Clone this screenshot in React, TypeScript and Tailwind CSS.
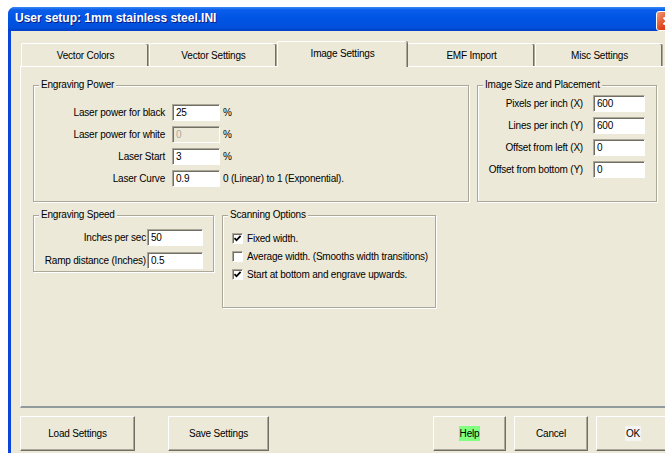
import React from "react";

const sunken =
  "border border-t-[#ACA899] border-l-[#ACA899] border-r-white border-b-white shadow-[inset_1px_1px_0_#716F64]";

function Field({ value, width, disabled }: { value: string; width: string; disabled?: boolean }) {
  return (
    <input
      readOnly
      defaultValue={value}
      disabled={disabled}
      className={`${sunken} ${width} h-[17px] px-[3px] text-[10px] outline-none ${
        disabled ? "bg-[#ECE9D8] text-[#ACA899]" : "bg-white text-black"
      }`}
    />
  );
}

function Group({ title, className, children }: { title: string; className: string; children: React.ReactNode }) {
  return (
    <div
      className={`relative border border-[#ACA899] shadow-[inset_1px_1px_0_#fff,1px_1px_0_#fff] ${className}`}
    >
      <span className="absolute -top-[7px] left-[5px] bg-[#ECE9D8] px-[2px] leading-[12px]">{title}</span>
      {children}
    </div>
  );
}

function Check({ label, checked }: { label: string; checked?: boolean }) {
  return (
    <div className="flex h-[12px] items-center">
      <span className={`${sunken} flex h-[11px] w-[11px] items-center justify-center bg-white`}>
        {checked && (
          <svg width="9" height="9" viewBox="0 0 9 9">
            <path d="M1.5 4.2 L3.5 6.3 L7.6 1.8" fill="none" stroke="#000" strokeWidth="1.8" />
          </svg>
        )}
      </span>
      <span className="ml-[4px]">{label}</span>
    </div>
  );
}

function Button({ label, width, hl }: { label: string; width: string; hl?: string }) {
  return (
    <button
      className={`${width} flex h-[35px] items-center justify-center border border-t-white border-l-white border-r-[#716F64] border-b-[#716F64] bg-[#ECE9D8] shadow-[inset_-1px_-1px_0_#ACA899]`}
    >
      <span className={hl ? `${hl} px-[1px]` : ""}>{label}</span>
    </button>
  );
}

const tabs = ["Vector Colors", "Vector Settings", "Image Settings", "EMF Import", "Misc Settings"];

export default function App() {
  return (
    <div className="h-[453px] w-[665px] overflow-hidden bg-white font-['Liberation_Sans',Arial,sans-serif] text-[10px] tracking-[-0.2px] text-black">
      <div className="ml-[8px] mt-[7px] flex h-[460px] w-[672px] flex-col overflow-hidden rounded-tl-[7px] bg-[#0A44D8]">
        {/* title bar */}
        <div className="flex h-[24px] shrink-0 items-start justify-between bg-[linear-gradient(to_bottom,#3A8CF6_0%,#0A5DEB_12%,#0054E3_50%,#0050DC_85%,#0040C4_100%)] pl-[7px] pr-[3px]">
          <span className="pt-[4px] text-[12px] font-bold leading-[14px] tracking-normal text-white [text-shadow:1px_1px_#0A1A80]">
            User setup: 1mm stainless steel.INI
          </span>
          <span className="mt-[4px] flex h-[20px] w-[21px] items-center justify-center rounded-[3px] border border-white bg-[linear-gradient(135deg,#F09A78,#E0441C_55%,#C8300C)]">
            <svg width="10" height="10" viewBox="0 0 10 10">
              <path d="M1.5 1.5 L8.5 8.5 M8.5 1.5 L1.5 8.5" stroke="#fff" strokeWidth="2" />
            </svg>
          </span>
        </div>

        {/* dialog body */}
        <div className="ml-[3px] flex flex-1 flex-col bg-[#ECE9D8] pl-[9px] pr-[10px] pt-[10px]">
          <div className="ml-[1px] flex h-[25px] items-end">
            {tabs.map((t) =>
              t === "Image Settings" ? (
                <div
                  key={t}
                  className="relative z-10 -mb-[1px] flex h-[26px] w-[130px] items-center justify-center rounded-t-[2px] border-l border-t border-white bg-[#ECE9D8] pb-[3px] shadow-[inset_-1px_0_0_#ACA899,1px_0_0_#716F64]"
                >
                  {t}
                </div>
              ) : (
                <div
                  key={t}
                  className="flex h-[23px] w-[128px] items-center justify-center rounded-t-[2px] border-l border-t border-white bg-[#ECE9D8] pt-[1px] shadow-[inset_-1px_0_0_#ACA899,inset_-2px_0_0_#716F64]"
                >
                  {t}
                </div>
              )
            )}
          </div>

          {/* tab page */}
          <div className="h-[342px] border-l border-t border-white border-b-2 border-b-[#919B9C] pl-[12px] pt-[18px]">
            <div className="flex gap-[8px]">
              <Group title="Engraving Power" className="h-[117px] w-[436px] pt-[18px]">
                <div className="flex flex-col gap-[5px]">
                  {[
                    ["Laser power for black", "25", "%"],
                    ["Laser power for white", "0", "%"],
                    ["Laser Start", "3", "%"],
                    ["Laser Curve", "0.9", "0 (Linear) to 1 (Exponential)."],
                  ].map(([label, val, suffix], i) => (
                    <div key={label} className="flex h-[17px] items-center">
                      <span className="w-[131px] text-right">{label}</span>
                      <span className="ml-[7px] flex">
                        <Field value={val} width="w-[48px]" disabled={i === 1} />
                      </span>
                      <span className="ml-[3px]">{suffix}</span>
                    </div>
                  ))}
                </div>
              </Group>

              <Group title="Image Size and Placement" className="h-[117px] w-[180px] pt-[9px]">
                <div className="flex flex-col gap-[5px]">
                  {[
                    ["Pixels per inch (X)", "600"],
                    ["Lines per inch (Y)", "600"],
                    ["Offset from left (X)", "0"],
                    ["Offset from bottom (Y)", "0"],
                  ].map(([label, val]) => (
                    <div key={label} className="flex h-[17px] items-center">
                      <span className="w-[105px] whitespace-nowrap text-right">{label}</span>
                      <span className="ml-[10px] flex">
                        <Field value={val} width="w-[52px]" />
                      </span>
                    </div>
                  ))}
                </div>
              </Group>
            </div>

            <div className="mt-[13px] flex items-start gap-[8px]">
              <Group title="Engraving Speed" className="h-[57px] w-[181px] pt-[13px]">
                <div className="flex flex-col gap-[6px]">
                  {[
                    ["Inches per sec", "50"],
                    ["Ramp distance (Inches)", "0.5"],
                  ].map(([label, val]) => (
                    <div key={label} className="flex h-[17px] items-center">
                      <span className="w-[112px] whitespace-nowrap text-right">{label}</span>
                      <span className="ml-[1px] flex">
                        <Field value={val} width="w-[56px]" />
                      </span>
                    </div>
                  ))}
                </div>
              </Group>

              <Group title="Scanning Options" className="h-[93px] w-[214px] pl-[9px] pt-[16px]">
                <div className="flex flex-col gap-[6px]">
                  <Check label="Fixed width." checked />
                  <Check label="Average width. (Smooths width transitions)" />
                  <Check label="Start at bottom and engrave upwards." checked />
                </div>
              </Group>
            </div>
          </div>

          {/* dialog buttons */}
          <div className="mt-[8px] flex">
            <Button label="Load Settings" width="w-[115px]" />
            <span className="ml-[33px] flex">
              <Button label="Save Settings" width="w-[101px]" />
            </span>
            <span className="ml-auto flex gap-[8px]">
              <Button label="Help" width="w-[73px]" hl="bg-[#80FF80]" />
              <Button label="Cancel" width="w-[74px]" />
              <Button label="OK" width="w-[74px]" hl="bg-[#F4F4F4]" />
            </span>
          </div>
        </div>
      </div>
    </div>
  );
}
